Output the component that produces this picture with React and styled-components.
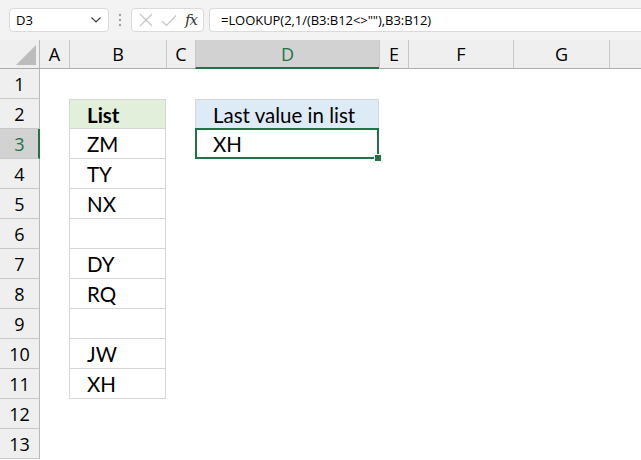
import React from 'react'
import styled, { createGlobalStyle } from 'styled-components'

const GlobalStyle = createGlobalStyle`
  html, body {
    margin: 0;
    padding: 0;
    background: #ffffff;
  }
  body {
    font-family: "Open Sans", "Noto Sans", sans-serif;
  }
`

const GREEN = '#217346'

const Page = styled.div`
  width: 641px;
  height: 460px;
  overflow: hidden;
  display: flex;
  flex-direction: column;
  background: #fff;
`

const FormulaBar = styled.div`
  height: 40px;
  flex: none;
  background: #f3f3f3;
  display: flex;
  align-items: center;
  padding-left: 9px;
  box-sizing: border-box;
`

const Box = styled.div`
  height: 24px;
  box-sizing: border-box;
  background: #fff;
  border: 1px solid #dadada;
  border-radius: 4px;
  display: flex;
  align-items: center;
  font-size: 13px;
  color: #000;
`

const NameBox = styled(Box)`
  width: 100px;
  padding: 0 6px 0 6px;
  justify-content: space-between;
`

const Dots = styled.div`
  width: 22px;
  display: flex;
  justify-content: center;
  color: #a8a8a8;
`

const FxBox = styled(Box)`
  width: 73px;
  padding: 0 6px 0 7px;
  justify-content: space-between;
`

const Fx = styled.span`
  font-family: "DejaVu Serif", "Liberation Serif", serif;
  font-style: italic;
  font-size: 15px;
  color: #333;
  letter-spacing: -1px;
`

const FormulaBox = styled(Box)`
  flex: 1;
  margin-left: 5px;
  border-right: none;
  border-radius: 4px 0 0 4px;
  padding-left: 11px;
  letter-spacing: -0.05px;
`

const Grid = styled.div`
  flex: 1;
  display: grid;
  grid-template-columns: 40px 29px 97px 29px 184px 29px 105px 96px 1fr;
  grid-template-rows: 29px repeat(13, 30px);
`

const Corner = styled.div`
  background: #efefef;
  border-right: 1px solid #b9b9b9;
  border-bottom: 1px solid #ababab;
  position: relative;
  &::after {
    content: '';
    position: absolute;
    right: 3px;
    bottom: 3px;
    width: 0;
    height: 0;
    border-left: 20px solid transparent;
    border-bottom: 20px solid #bcbcbc;
  }
`

const ColHead = styled.div`
  background: ${p => (p.$active ? '#d2d2d2' : '#efefef')};
  border-left: ${p => (p.$first ? 'none' : '1px solid #c8c8c8')};
  border-bottom: ${p => (p.$active ? `2px solid ${GREEN}` : '1px solid #ababab')};
  color: ${p => (p.$active ? GREEN : '#000')};
  font-size: 18px;
  display: flex;
  align-items: center;
  justify-content: center;
  padding-top: ${p => (p.$active ? '1px' : '0')};
  box-sizing: border-box;
`

const RowHead = styled.div`
  background: ${p => (p.$active ? '#d2d2d2' : '#efefef')};
  border-right: ${p => (p.$active ? `2px solid ${GREEN}` : '1px solid #b9b9b9')};
  border-bottom: 1px solid #c8c8c8;
  color: ${p => (p.$active ? GREEN : '#000')};
  font-size: 18px;
  display: flex;
  align-items: center;
  justify-content: center;
  padding-left: ${p => (p.$active ? '1px' : '0')};
  box-sizing: border-box;
`

const Cell = styled.div`
  box-sizing: border-box;
  font-family: Lato, "Open Sans", sans-serif;
  font-size: 20.5px;
  color: #000;
  display: flex;
  align-items: center;
  padding-left: 17px;
  padding-top: 1px;
  background: ${p => p.$fill || '#fff'};
  font-weight: ${p => (p.$bold ? 700 : 400)};
  border-left: ${p => (p.$boxed ? '1px solid #d6d6d6' : 'none')};
  border-right: ${p => (p.$boxed ? '1px solid #d6d6d6' : 'none')};
  border-bottom: ${p => (p.$boxed ? '1px solid #d6d6d6' : 'none')};
  border-top: ${p => (p.$top ? '1px solid #d6d6d6' : 'none')};
`

const Selected = styled(Cell)`
  position: relative;
  margin-top: -1px;
  border: 2px solid ${GREEN};
  padding-left: 16px;
  &::after {
    content: '';
    position: absolute;
    right: -5px;
    bottom: -5px;
    width: 6px;
    height: 6px;
    background: ${GREEN};
    border: 1px solid #fff;
  }
`

const Chevron = () => (
  <svg width="12" height="8" viewBox="0 0 12 8">
    <path d="M1.5 1.5 L6 6 L10.5 1.5" fill="none" stroke="#444" strokeWidth="1.2" />
  </svg>
)

const Cross = () => (
  <svg width="14" height="14" viewBox="0 0 14 14">
    <path d="M1 1 L13 13 M13 1 L1 13" stroke="#c4c4c4" strokeWidth="1.2" />
  </svg>
)

const Check = () => (
  <svg width="16" height="13" viewBox="0 0 16 13">
    <path d="M1 7 L5.5 11.5 L15 1.5" fill="none" stroke="#c4c4c4" strokeWidth="1.2" />
  </svg>
)

const VDots = () => (
  <svg width="4" height="14" viewBox="0 0 4 14">
    <circle cx="2" cy="2" r="1.2" fill="#a0a0a0" />
    <circle cx="2" cy="7" r="1.2" fill="#a0a0a0" />
    <circle cx="2" cy="12" r="1.2" fill="#a0a0a0" />
  </svg>
)

const columns = ['A', 'B', 'C', 'D', 'E', 'F', 'G', '']
const listValues = ['ZM', 'TY', 'NX', '', 'DY', 'RQ', '', 'JW', 'XH']

function renderRow(r) {
  const cells = []
  cells.push(
    <RowHead key={`h${r}`} $active={r === 3}>
      {r}
    </RowHead>
  )
  columns.forEach(c => {
    const key = `${c || 'H'}${r}`
    if (c === 'B' && r === 2) {
      cells.push(
        <Cell key={key} $boxed $top $bold $fill="#e2efda">
          List
        </Cell>
      )
    } else if (c === 'B' && r >= 3 && r <= 11) {
      cells.push(
        <Cell key={key} $boxed>
          {listValues[r - 3]}
        </Cell>
      )
    } else if (c === 'D' && r === 2) {
      cells.push(
        <Cell key={key} $boxed $top $fill="#ddebf7">
          Last value in list
        </Cell>
      )
    } else if (c === 'D' && r === 3) {
      cells.push(<Selected key={key}>XH</Selected>)
    } else {
      cells.push(<Cell key={key} />)
    }
  })
  return cells
}

export default function App() {
  const rows = []
  for (let r = 1; r <= 13; r++) rows.push(...renderRow(r))
  return (
    <Page>
      <GlobalStyle />
      <FormulaBar>
        <NameBox>
          <span>D3</span>
          <Chevron />
        </NameBox>
        <Dots>
          <VDots />
        </Dots>
        <FxBox>
          <Cross />
          <Check />
          <Fx>fx</Fx>
        </FxBox>
        <FormulaBox>=LOOKUP(2,1/(B3:B12&lt;&gt;""),B3:B12)</FormulaBox>
      </FormulaBar>
      <Grid>
        <Corner />
        {columns.map((c, i) => (
          <ColHead key={`c${i}`} $first={i === 0} $active={c === 'D'}>
            {c}
          </ColHead>
        ))}
        {rows}
      </Grid>
    </Page>
  )
}
